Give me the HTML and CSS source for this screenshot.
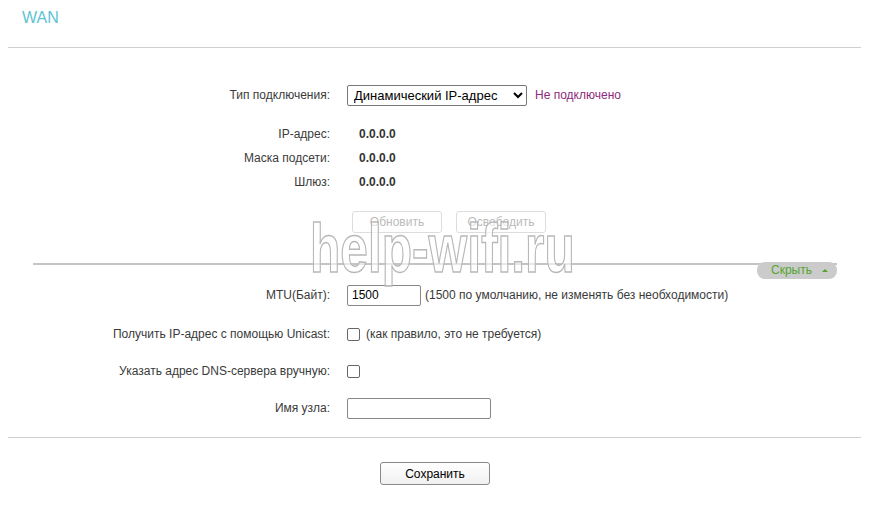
FILE: index.html
```
<!DOCTYPE html>
<html lang="ru">
<head>
    <meta charset="UTF-8">
    <title>WAN</title>
    <link rel="stylesheet" href="styles.css">
</head>
<body>
    <div class="page">
        <h1 class="title">WAN</h1>
        <hr class="rule">

        <div class="row first">
            <label class="label">Тип подключения:</label>
            <div class="value">
                <select class="select">
                    <option>Динамический IP-адрес</option>
                </select>
                <span class="status">Не подключено</span>
            </div>
        </div>

        <div class="info">
            <div class="row">
                <span class="label">IP-адрес:</span>
                <b class="num">0.0.0.0</b>
            </div>
            <div class="row">
                <span class="label">Маска подсети:</span>
                <b class="num">0.0.0.0</b>
            </div>
            <div class="row">
                <span class="label">Шлюз:</span>
                <b class="num">0.0.0.0</b>
            </div>
        </div>

        <div class="row actions">
            <span class="label"></span>
            <div class="value">
                <button class="btn-off" disabled>Обновить</button>
                <button class="btn-off" disabled>Освободить</button>
            </div>
        </div>

        <div class="divider">
            <span class="toggle">Скрыть <i class="arrow"></i></span>
        </div>

        <div class="advanced">
            <div class="row mtu">
                <label class="label">MTU(Байт):</label>
                <div class="value">
                    <input class="field short" type="text" value="1500">
                    <span class="hint">(1500 по умолчанию, не изменять без необходимости)</span>
                </div>
            </div>
            <div class="row unicast">
                <label class="label">Получить IP-адрес с помощью Unicast:</label>
                <div class="value">
                    <span class="box"></span>
                    <span class="hint">(как правило, это не требуется)</span>
                </div>
            </div>
            <div class="row dns">
                <label class="label">Указать адрес DNS-сервера вручную:</label>
                <div class="value">
                    <span class="box"></span>
                </div>
            </div>
            <div class="row host">
                <label class="label">Имя узла:</label>
                <div class="value">
                    <input class="field long" type="text">
                </div>
            </div>
        </div>

        <hr class="rule">

        <div class="save-row">
            <button class="btn-save">Сохранить</button>
        </div>

        <div class="watermark">help-wifi.ru</div>
    </div>
</body>
</html>
```

FILE: styles.css
```
body {
    margin: 0;
    background: #fff;
    font-family: "Liberation Sans", Arial, sans-serif;
    font-size: 12px;
    color: #333;
}
.page {
    position: relative;
    width: 853px;
    padding: 0 22px 0 8px;
}
.title {
    margin: 0;
    height: 47px;
    padding: 9px 0 0 14px;
    box-sizing: border-box;
    font-size: 16px;
    font-weight: normal;
    color: #5ec3d3;
}
.rule {
    margin: 0;
    border: none;
    border-top: 1px solid #cfcfcf;
}
.row {
    display: flex;
    align-items: center;
    height: 24px;
}
.label {
    width: 322px;
    padding-right: 17px;
    text-align: right;
    color: #3a3a3a;
}
.value {
    display: flex;
    align-items: center;
}
.first {
    margin-top: 35px;
}
.select {
    width: 180px;
    height: 21px;
    padding: 0 2px;
    font-family: "Liberation Sans", Arial, sans-serif;
    font-size: 13px;
    color: #000;
    background: #fff;
    border: 1px solid #777;
    border-radius: 2px;
}
.status {
    margin-left: 8px;
    color: #8c2a7c;
}
.info {
    margin-top: 15px;
}
.num {
    margin-left: 12px;
    color: #333;
}
.actions {
    margin-top: 17px;
    height: 22px;
}
.btn-off {
    height: 22px;
    width: 90px;
    margin-left: 5px;
    margin-right: 9px;
    padding: 0;
    font-family: "Liberation Sans", Arial, sans-serif;
    font-size: 12px;
    color: #bbb;
    background: #fff;
    border: 1px solid #ddd;
    border-radius: 3px;
}
.divider {
    position: relative;
    margin: 30px 0 0 25px;
    width: 804px;
    height: 2px;
    background: #c4c4c4;
}
.toggle {
    position: absolute;
    right: 0;
    top: -1px;
    width: 80px;
    height: 17px;
    line-height: 17px;
    box-sizing: border-box;
    padding-left: 14px;
    border-radius: 8px;
    background: #cbcbcb;
    color: #54a42e;
}
.arrow {
    position: absolute;
    right: 9px;
    top: 7px;
    border-left: 3px solid transparent;
    border-right: 3px solid transparent;
    border-bottom: 3px solid #54a42e;
}
.mtu {
    margin-top: 18px;
}
.unicast {
    margin-top: 15px;
}
.dns {
    margin-top: 13px;
}
.host {
    margin-top: 13px;
}
.field {
    height: 21px;
    box-sizing: border-box;
    padding: 0 4px;
    font-family: "Liberation Sans", Arial, sans-serif;
    font-size: 12px;
    color: #000;
    border: 1px solid #888;
    border-radius: 2px;
}
.short {
    width: 74px;
}
.long {
    width: 144px;
}
.hint {
    margin-left: 4px;
    color: #3a3a3a;
}
.box {
    display: inline-block;
    width: 11px;
    height: 11px;
    border: 1px solid #666;
    border-radius: 2px;
    background: #fff;
}
.unicast .hint {
    margin-left: 6px;
}
.advanced + .rule {
    margin-top: 17px;
}
.save-row {
    display: flex;
    justify-content: flex-start;
    padding: 24px 0 0 372px;
}
.btn-save {
    width: 110px;
    height: 23px;
    padding: 0;
    font-family: "Liberation Sans", Arial, sans-serif;
    font-size: 12px;
    color: #000;
    background: linear-gradient(#fff, #f0f0f0);
    border: 1px solid #8a8a8a;
    border-radius: 3px;
}
.watermark {
    position: absolute;
    left: 310px;
    top: 214px;
    font-size: 68px;
    font-weight: bold;
    line-height: 1;
    transform: scaleX(0.73);
    transform-origin: left top;
    color: rgba(255, 255, 255, 0.6);
    -webkit-text-stroke: 1.5px #b8b8b8;
    pointer-events: none;
}
```
